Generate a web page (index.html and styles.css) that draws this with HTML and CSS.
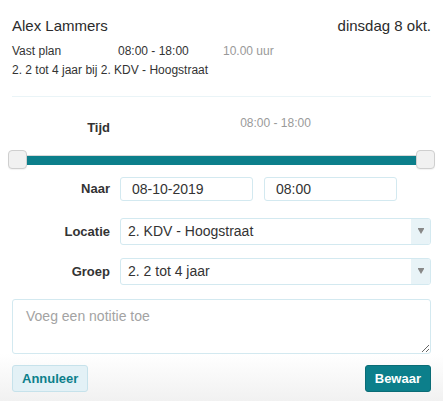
FILE: index.html
```html
<!DOCTYPE html>
<html lang="nl">
<head>
  <meta charset="UTF-8" />
  <meta name="viewport" content="width=device-width, initial-scale=1.0"/>
  <title>Plan wijzigen</title>
  <link rel="stylesheet" href="styles.css">
</head>
<body>
  <div class="page">
    <div class="head">
      <span class="name">Alex Lammers</span>
      <span class="day">dinsdag 8 okt.</span>
    </div>
    <div class="plan">
      <div class="plan-row">
        <span>Vast plan</span>
        <span>08:00 - 18:00</span>
        <span class="muted">10.00 uur</span>
      </div>
      <div>2. 2 tot 4 jaar bij 2. KDV - Hoogstraat</div>
    </div>

    <div class="divider"></div>

    <div class="row row-tijd">
      <label class="label">Tijd</label>
      <div class="range-text">08:00 - 18:00</div>
    </div>

    <div class="slider">
      <span class="handle"></span>
      <span class="track"></span>
      <span class="handle"></span>
    </div>

    <div class="row row-naar">
      <label class="label">Naar</label>
      <input class="input" type="text" value="08-10-2019">
      <input class="input" type="text" value="08:00">
    </div>

    <div class="row row-locatie">
      <label class="label">Locatie</label>
      <div class="select">
        <span class="select-value">2. KDV - Hoogstraat</span>
        <span class="select-arrow"><i></i></span>
      </div>
    </div>

    <div class="row row-groep">
      <label class="label">Groep</label>
      <div class="select">
        <span class="select-value">2. 2 tot 4 jaar</span>
        <span class="select-arrow"><i></i></span>
      </div>
    </div>

    <textarea class="note" placeholder="Voeg een notitie toe"></textarea>
  </div>

  <div class="footer">
    <button class="btn btn-light">Annuleer</button>
    <button class="btn btn-primary">Bewaar</button>
  </div>
</body>
</html>
```

FILE: styles.css
```css
body {
  font-family: "Liberation Sans", Arial, sans-serif;
  color: #333;
  background-color: white;
  margin: 0;
}

.page {
  padding: 16px 12px 0;
}

.head {
  display: flex;
  justify-content: space-between;
  font-size: 15px;
  line-height: 20px;
  color: #2b2b2b;
}

.plan {
  margin-top: 6px;
  font-size: 12px;
  line-height: 19px;
}

.plan-row {
  display: grid;
  grid-template-columns: 106px 105px auto;
}

.muted {
  color: #999;
}

.divider {
  margin-top: 16px;
  border-top: 1px solid #eaf4f7;
}

.row {
  display: flex;
  align-items: center;
  gap: 10px;
}

.label {
  width: 98px;
  flex-shrink: 0;
  text-align: right;
  font-size: 13px;
  line-height: 16px;
  font-weight: bold;
  color: #333;
}

.row-tijd {
  margin-top: 18px;
  align-items: flex-start;
}

.row-tijd .label {
  padding-top: 5px;
}

.range-text {
  flex: 1;
  text-align: center;
  font-size: 12px;
  line-height: 16px;
  color: #9a9a9a;
}

.slider {
  display: flex;
  align-items: center;
  margin: 14px -4px 0;
  height: 19px;
}

.track {
  flex: 1;
  height: 10px;
  background-color: #0c7f8b;
  box-shadow: inset 0 1px 0 #d9d9d9;
}

.handle {
  width: 17px;
  height: 17px;
  flex-shrink: 0;
  background-color: #f1f1f1;
  border: 1px solid #cfcfcf;
  border-radius: 4px;
  box-shadow: 0 1px 1px rgba(0,0,0,0.05);
}

.row-naar {
  margin-top: 8px;
}

.input {
  width: 133px;
  height: 24px;
  box-sizing: border-box;
  margin: 0 1px 0 0;
  padding: 0 11px;
  border: 1px solid #d3e9f0;
  border-radius: 3px;
  font-family: inherit;
  font-size: 14px;
  color: #333;
  outline: none;
}

.row-locatie {
  margin-top: 17px;
}

.row-groep {
  margin-top: 13px;
}

.select {
  flex: 1;
  display: flex;
  height: 27px;
  box-sizing: border-box;
  border: 1px solid #d3e9f0;
  border-radius: 3px;
  background-color: white;
  overflow: hidden;
}

.select-value {
  flex: 1;
  padding-left: 7px;
  font-size: 14px;
  line-height: 25px;
  color: #333;
}

.select-arrow {
  width: 19px;
  display: flex;
  align-items: center;
  justify-content: center;
  background-color: #e8f3f7;
}

.select-arrow i {
  width: 0;
  height: 0;
  border-left: 3.5px solid transparent;
  border-right: 3.5px solid transparent;
  border-top: 5px solid #888;
  box-shadow: 0 -1px 0 #888;
}

.note {
  display: block;
  width: 100%;
  height: 55px;
  box-sizing: border-box;
  margin-top: 14px;
  padding: 6px 13px;
  border: 1px solid #d3e9f0;
  border-radius: 3px;
  font-family: inherit;
  font-size: 14px;
  line-height: 20px;
  color: #333;
  outline: none;
}

.note::placeholder {
  color: #a3a3a3;
}

.footer {
  display: flex;
  justify-content: space-between;
  padding: 11px 12px 9px;
  background: linear-gradient(to bottom, #ffffff, #f1f1f1);
}

.btn {
  height: 27px;
  padding: 0 9px;
  border-radius: 3px;
  font-family: inherit;
  font-size: 13px;
  font-weight: bold;
  cursor: pointer;
}

.btn-light {
  background-color: #e3f1f6;
  border: 1px solid #c6e2eb;
  color: #0c7f8b;
}

.btn-primary {
  background-color: #0c7f8b;
  border: 1px solid #0a6c76;
  color: white;
}
```
